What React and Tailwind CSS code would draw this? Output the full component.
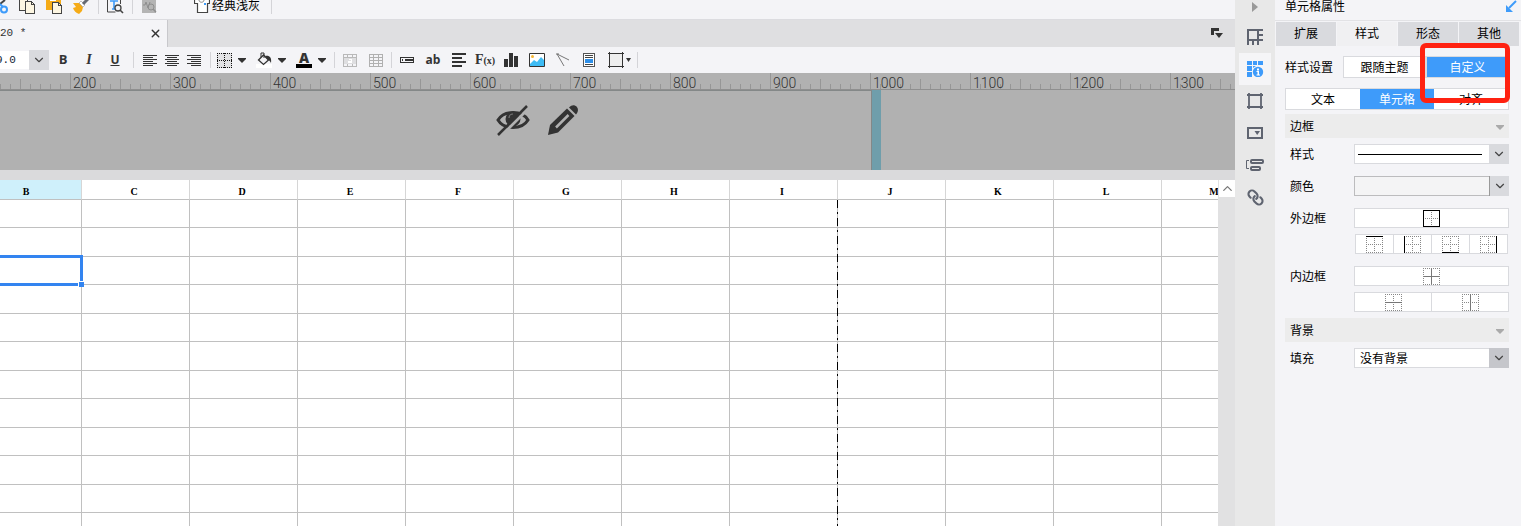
import React, { useState } from 'react'
import { ChevronDown, ChevronUp, Link, X } from 'lucide-react';

const columns = ['B', 'C', 'D', 'E', 'F', 'G', 'H', 'I', 'J', 'K', 'L', 'M'];
const rulerMarks = ['', 200, 300, 400, 500, 600, 700, 800, 900, 1000, 1100, 1200, 1300];
const rows = Array.from({ length: 40 }, (_, i) => i);

/* ---------- small shared pieces ---------- */

const Sep = ({ tight }) => (
  <span className={`w-px h-4 shrink-0 bg-[#d4d4d8] ${tight ? 'mx-0.5' : 'mx-[5px]'}`} />
);

const Caret = ({ className = 'text-[#333]' }) => (
  <svg width="8" height="5" viewBox="0 0 8 5" className={className}>
    <path d="M0 0h8v1L4 5 0 1z" fill="currentColor" />
  </svg>
);

const Tool = ({ label, wide = 'w-[26px]', children }) => (
  <button aria-label={label} className={`${wide} h-5 shrink-0 flex items-center justify-center text-[#333]`}>
    {children}
  </button>
);

// Icon button followed by a drop arrow
const DropTool = ({ label, children }) => (
  <div className="flex items-center shrink-0">
    <Tool label={label} wide="w-4">{children}</Tool>
    <Tool label={`${label} menu`} wide="w-5"><Caret /></Tool>
  </div>
);

const Lines = ({ widths, end, step = 2 }) => (
  <svg width="14" height={step > 2 ? 14 : 11} viewBox={step > 2 ? '0 0 14 14' : '0 0 14 11'} shapeRendering="crispEdges">
    {widths.map((w, i) => (
      <rect key={i} x={end === 'right' ? 14 - w : end === 'center' ? (14 - w) / 2 : 0} y={i * step} width={w} height={step > 2 ? 2 : 1} fill="#333" />
    ))}
  </svg>
);

/* ---------- top bar ---------- */

const TopBar = () => (
  <div className="h-5 shrink-0 flex items-start bg-[#f4f4f7] border-b border-[#dcdce0]">
    <button aria-label="Cut" className="w-[19px] h-[14px]">
      <svg width="8" height="14" viewBox="0 0 8 14" fill="none">
        <path d="M0 4l5-4" stroke="#444" strokeWidth="2" />
        <circle cx="4" cy="9.5" r="3" stroke="#3e9bfa" strokeWidth="2" />
        <path d="M0 4l3 3" stroke="#3e9bfa" strokeWidth="2" />
      </svg>
    </button>
    <button aria-label="Copy" className="w-[27px] h-[14px]">
      <svg width="17" height="14" viewBox="0 0 17 14" fill="#fdf6e2" stroke="#444" shapeRendering="crispEdges">
        <path d="M.5-2v12h8V-2" />
        <path d="M6.500 1.500h6l3 3v9h-9z" />
        <path d="M12.500 1.500v3h3" fill="none" />
      </svg>
    </button>
    <button aria-label="Paste" className="w-[27px] h-[14px]">
      <svg width="17" height="14" viewBox="0 0 17 14" shapeRendering="crispEdges">
        <path d="M0 0h15v10H0z" fill="#f5ab17" />
        <path d="M4 0h6v1H4z" fill="#fff" />
        <path d="M6.500 2.500h6l3 3v8h-9z" fill="#fdf6e2" stroke="#444" />
        <path d="M12.500 2.500v3h3" fill="none" stroke="#444" />
      </svg>
    </button>
    <button aria-label="Format painter" className="w-5 h-[14px]">
      <svg width="16" height="14" viewBox="0 0 16 14">
        <path d="M0 3l7 0 3 4-1 4-3 3c-3-1-5-3-6-6l3-1z" fill="#f5ab17" />
        <path d="M6 3l2-2 4 4-2 2z" fill="#fff" stroke="#999" strokeWidth=".6" />
        <path d="M10 4l5-5" stroke="#666a72" strokeWidth="3" />
      </svg>
    </button>
    <span className="w-px h-[14px] ml-[5px] mr-2 bg-[#d4d4d8]" />
    <button aria-label="Preview" className="w-5 h-[14px]">
      <svg width="17" height="14" viewBox="0 0 17 14" fill="none">
        <path d="M.5-1v13h8M13.500-1v5" stroke="#444" />
        <path d="M3 1h8M7 1v8M5 9h3" stroke="#3e9bfa" strokeWidth="1.600" />
        <circle cx="11" cy="8" r="3" fill="#f4f4f7" stroke="#444" strokeWidth="1.300" />
        <path d="M13 10l3 3" stroke="#444" strokeWidth="1.600" />
      </svg>
    </button>
    <span className="w-px h-[14px] ml-[5px] mr-[9px] bg-[#d4d4d8]" />
    <button aria-label="Check" className="w-[52px] h-[14px]">
      <svg width="15" height="14" viewBox="0 0 15 14" fill="none">
        <path d="M0 0h14v13H0z" fill="#b4b4b4" />
        <path d="M1 5h2l1-3 2 6 2-6" stroke="#8e8e8e" />
        <circle cx="9" cy="7" r="3" stroke="#8e8e8e" />
        <path d="M11 9l3 3" stroke="#8e8e8e" strokeWidth="1.500" />
      </svg>
    </button>
    <button className="flex items-start gap-0.5 text-xs leading-3 text-black whitespace-nowrap">
      <svg width="16" height="14" viewBox="0 0 16 14" fill="none">
        <path d="M.5-1v4.500h3v9h10v-9h2V-1" fill="#fff" stroke="#444" strokeWidth="1.200" />
        <path d="M5 0c0 3 5 3 5 0" stroke="#888" />
        <path d="M10 3h2v2h-2z" fill="#3e9bfa" />
      </svg>
      经典浅灰
    </button>
    <span className="w-px h-[14px] ml-[11px] bg-[#d4d4d8]" />
  </div>
);

const FileTabs = () => (
  <div className="h-[27px] shrink-0 flex bg-[#dfdfe1]">
    <div className="w-[168px] flex items-center justify-between pr-[5px] bg-[#f4f4f7] border-r border-[#c8c8cc]">
      <span className="font-['Liberation_Mono',monospace] text-[11px] text-[#333]">20 *</span>
      <button aria-label="Close" className="text-[#333]"><X size={13} strokeWidth={2.5} /></button>
    </div>
    <button aria-label="All files" className="ml-auto mr-3">
      <svg width="12" height="11" viewBox="0 0 12 11" fill="#333">
        <path d="M0 0h8v3H3v4H0z" />
        <path d="M4 5h8L8 10z" />
      </svg>
    </button>
  </div>
);

/* ---------- formatting toolbar ---------- */

const FormatBar = () => (
  <div className="h-[26px] shrink-0 flex items-center bg-[#f4f4f7]">
    <input aria-label="Font size" defaultValue="9.0" className="w-[35px] -ml-1.5 h-[18px] pl-0.5 bg-white font-['Liberation_Mono',monospace] text-[11px] text-[#123] outline-none" />
    <button aria-label="Font sizes" className="w-5 h-5 flex items-center justify-center bg-[#d9dade] text-[#444] mr-px">
      <ChevronDown size={14} />
    </button>
    <Tool label="Bold"><b className="font-['Open_Sans',sans-serif] text-[13px] font-bold">B</b></Tool>
    <Tool label="Italic"><i className="font-['Liberation_Serif',serif] text-sm font-bold">I</i></Tool>
    <Tool label="Underline"><u className="font-['Open_Sans',sans-serif] text-xs font-bold">U</u></Tool>
    <Sep />
    <Tool label="Align left" wide="w-[22px]"><Lines widths={[14, 10, 14, 10, 14, 10]} /></Tool>
    <Tool label="Align center" wide="w-[22px]"><Lines widths={[14, 10, 14, 10, 14, 10]} end="center" /></Tool>
    <Tool label="Align right" wide="w-[22px]"><Lines widths={[14, 10, 14, 10, 14, 10]} end="right" /></Tool>
    <Sep />
    <div className="flex gap-1">
      <DropTool label="Border">
        <svg width="15" height="15" viewBox="0 0 15 15" fill="none" stroke="#111" strokeDasharray="1 1" shapeRendering="crispEdges">
          <path d="M0 0h15v15H0z" fill="#e2e2e4" stroke="none" />
          <path d="M0 .5h15M0 7.500h15M0 14.500h15M.5 0v15M7.500 0v15M14.500 0v15" />
        </svg>
      </DropTool>
      <DropTool label="Fill">
        <svg width="16" height="16" viewBox="0 0 16 16" fill="none">
          <path d="M0 12h16v4H0z" fill="#fff" />
          <path d="M7.500 3l5 5-5 4.500-5-4.500z" stroke="#333" strokeWidth="1.300" />
          <path d="M5 5V1h3v5" stroke="#333" />
          <path d="M9 4c4-1 7 1 6 7-1-2-2-3-3-3z" fill="#333" />
        </svg>
      </DropTool>
      <DropTool label="Text color">
        <span className="w-4 h-4 flex items-center justify-center border-b-4 border-black font-['Open_Sans',sans-serif] text-sm leading-3 font-extrabold">A</span>
      </DropTool>
    </div>
    <Sep tight />
    <Tool label="Merge">
      <svg width="14" height="13" viewBox="0 0 14 13" fill="none" stroke="#b9b9b9" shapeRendering="crispEdges">
        <path d="M.5.5h13v12H.5zM0 3.500h14M4.500 0v3M9.500 0v3M4.500 10v3M9.500 10v3" />
        <path d="M1 4h12v6H1z" fill="#dedee0" stroke="none" />
        <path d="M5.500 5.500h3v3h-3v-1.500h3" stroke="#fff" />
      </svg>
    </Tool>
    <Tool label="Unmerge">
      <svg width="14" height="13" viewBox="0 0 14 13" fill="none" stroke="#b0b0b0" shapeRendering="crispEdges">
        <path d="M.5.5h13v12H.5zM0 3.500h14M0 6.500h14M0 9.500h14M4.500 0v13M9.500 0v13" />
      </svg>
    </Tool>
    <Sep tight />
    <Tool label="Text field">
      <svg width="14" height="6" viewBox="0 0 14 6" fill="none" stroke="#333" shapeRendering="crispEdges">
        <path d="M.5.5h13v5H.5zM2.500 2v2M5 2.500h7v1H5z" />
      </svg>
    </Tool>
    <Tool label="Label"><span className="font-['Open_Sans',sans-serif] text-xs font-bold">ab</span></Tool>
    <Tool label="Rich text"><Lines widths={[14, 10, 14, 10]} step={4} /></Tool>
    <Tool label="Formula"><span className="font-['Liberation_Serif',serif] text-sm font-bold">F<span className="text-[10px]">(x)</span></span></Tool>
    <Tool label="Chart">
      <svg width="14" height="14" viewBox="0 0 14 14" fill="#333"><path d="M0 6h4v8H0zM5 0h4v14H5zM10 3h4v11h-4z" /></svg>
    </Tool>
    <Tool label="Image">
      <svg width="16" height="14" viewBox="0 0 16 14">
        <path d="M.5.5h15v13H.5z" fill="#fff" stroke="#333" />
        <circle cx="3.500" cy="3.500" r="1.500" fill="#f7b733" />
        <path d="M1 11l4-4 3 2 4-5 3 3v6H1z" fill="#3ebcf5" />
      </svg>
    </Tool>
    <Tool label="Slash line">
      <svg width="14" height="14" viewBox="0 0 14 14" fill="none" stroke="#777"><path d="M1 1l12 6M1 1l7 12M0 1h3" /></svg>
    </Tool>
    <Tool label="Sub report">
      <svg width="12" height="14" viewBox="0 0 12 14" shapeRendering="crispEdges">
        <path d="M.5.5h11v13H.5z" fill="#fff" stroke="#555" />
        <path d="M2 2h8v1H2zM2 4h8v1H2zM2 11h8v1H2z" fill="#444" />
        <path d="M2 6h8v4H2z" fill="#2f8fe8" />
      </svg>
    </Tool>
    <div className="flex items-center ml-1.5">
      <Tool label="Float element" wide="w-4">
        <svg width="16" height="16" viewBox="0 0 16 16" fill="none" stroke="#333" shapeRendering="crispEdges">
          <path d="M2 2h12v12H2z" fill="#eee" stroke="none" />
          <path d="M0 1.500h16M0 14.500h16M1.500 0v16M14.500 0v16" />
        </svg>
      </Tool>
      <Tool label="Float menu" wide="w-2"><svg width="5" height="4" viewBox="0 0 5 4"><path d="M0 0h5L2.500 4z" fill="#333" /></svg></Tool>
    </div>
    <Sep />
  </div>
);

/* ---------- ruler + canvas band ---------- */

const Ruler = () => (
  <div className="h-[17px] shrink-0 flex overflow-hidden bg-[#b1b1b1] border-b border-[#8f8f8f]">
    {rulerMarks.map((mark, i) => (
      <div key={i} className={`relative w-[100px] h-4 shrink-0 ${i === 0 ? '-ml-[30px]' : ''}`}>
        <svg width="100" height="16" viewBox="0 0 100 16" stroke="#969696" shapeRendering="crispEdges" className="absolute inset-0">
          <path d="M.5 0v16M50.500 6v10" />
          {[10, 20, 30, 40, 60, 70, 80, 90].map((x) => <path key={x} d={`M${x + 0.5} 11v5`} />)}
        </svg>
        <span className="relative pl-[3px] block font-['Roboto',sans-serif] font-light text-sm leading-5 text-[#333]">{mark}</span>
      </div>
    ))}
  </div>
);

const Band = () => (
  <div className="h-[90px] shrink-0 flex bg-[#b1b1b1] border-b-[10px] border-[#dadadc]">
    <div className="w-[872px] shrink-0 flex items-start gap-4 pl-[496px] pt-3 border-t border-r border-[#848888]">
      <button aria-label="Hide">
        <svg width="34" height="34" viewBox="0 0 34 34" fill="none">
          <path d="M2 17C8 7 26 7 32 17 26 27 8 27 2 17z" stroke="#333" strokeWidth="3" />
          <circle cx="17" cy="16" r="7.500" fill="#333" />
          <path d="M13 15a4 4 0 0 1 4-4" stroke="#777" strokeWidth="1.200" />
          <path d="M4 34L34 4" stroke="#b1b1b1" strokeWidth="3" />
          <path d="M2 32L31 3" stroke="#333" strokeWidth="2.500" />
        </svg>
      </button>
      <button aria-label="Edit">
        <svg width="34" height="34" viewBox="0 0 34 34" fill="#333">
          <path d="M2 32l2-10L21 5.500l7.500 7.500L12 29.500z" />
          <path d="M10 24.500L22.500 12" stroke="#b1b1b1" strokeWidth="2.500" />
          <path d="M23 4.500C26 1 29 2 30.500 3.500s2.500 4.500-.5 8z" />
        </svg>
      </button>
    </div>
    <div className="w-[9px] bg-[#6f9eab]" />
  </div>
);

/* ---------- spreadsheet ---------- */

const Sheet = () => (
  <div className="flex-1 min-h-0 flex bg-white">
    <div className="relative flex-1 min-w-0 overflow-hidden">
      <table className="table-fixed w-[1296px] -ml-[26px] border-separate border-spacing-0">
        <thead>
          <tr className="h-5">
            {columns.map((c) => (
              <th key={c} className={`p-0 pt-1 pr-[3px] border-r border-b border-r-[#d6d6d6] border-b-[#c0c0c0] font-['Liberation_Serif',serif] text-[10px] leading-[15px] font-bold text-black ${c === 'B' ? 'bg-[#cff0fb]' : 'bg-white'}`}>
                {c}
              </th>
            ))}
          </tr>
        </thead>
        <tbody>
          {rows.map((r) => (
            <tr key={r} className={r % 2 ? 'h-[29px]' : 'h-7'}>
              {columns.map((c) => (
                <td key={c} className="relative p-0 border-r border-b border-[#c0c0c0]">
                  {r === 2 && c === 'B' && (
                    <div className="absolute left-0 -right-0.5 -top-0.5 -bottom-0.5 z-10 border-[3px] border-[#3384f0]">
                      <span className="absolute -right-1 -bottom-1 w-[6px] h-[6px] bg-[#3384f0] border-t border-l border-white" />
                    </div>
                  )}
                  {/* page break line */}
                  {c === 'I' && r === 0 && (
                    <svg width="1" height="1200" className="absolute -right-px top-0 z-10" shapeRendering="crispEdges">
                      <path d="M.5 0v1200" stroke="#000" strokeDasharray="8 4 2 4" />
                    </svg>
                  )}
                </td>
              ))}
            </tr>
          ))}
        </tbody>
      </table>
    </div>
    <div className="w-[17px] shrink-0 pl-px bg-[#e1e1e2]">
      <button aria-label="Scroll up" className="w-4 h-[17px] flex items-center justify-center bg-white text-[#777]">
        <ChevronUp size={15} strokeWidth={2} />
      </button>
    </div>
  </div>
);

/* ---------- icon rail ---------- */

const railIcons = [
  { name: 'Cell element', art: <path d="M2 1h10v10H2zM12 1h5M12 6h5M12 11h5M2 12v4M7 12v4M12 12v4" /> },
  {
    name: 'Cell attributes',
    active: true,
    art: (
      <g stroke="none" fill="currentColor">
        <path d="M1 0h5v4H1zM7 0h4v4H7zM12 0h5v4h-5zM1 5h5v5H1zM1 11h5v5H1zM7 5h3L7 7z" />
        <circle cx="12" cy="11" r="5.200" />
        <path d="M11 7.500h2v2h-2zM10.500 10H13v3.500h1v1h-3.500v-1h1V11h-1z" fill="#fff" />
      </g>
    ),
  },
  { name: 'Float element', art: <path d="M3 2h12v12H3zM1 2h16M1 14h16M3 0v16M15 0v16" strokeWidth="1.800" /> },
  { name: 'Widget', art: <><path d="M2 3h14v10H2z" /><path d="M8.500 6h5.500L11.200 10z" fill="currentColor" stroke="none" /></> },
  { name: 'Condition', art: <><path d="M3 3.500H.5v8H3" strokeWidth="1" /><rect x="5" y="3" width="12" height="3" rx="1" /><rect x="5" y="10" width="9" height="3" rx="1" /></> },
];

const Rail = () => (
  <nav className="w-10 shrink-0 flex flex-col items-center bg-[#e8e8e8]">
    <button aria-label="Collapse" className="h-[21px] pb-2 flex items-center">
      <svg width="6" height="10" viewBox="0 0 6 10"><path d="M0 0l6 5-6 5z" fill="#999" /></svg>
    </button>
    {railIcons.map((item) => (
      <button
        key={item.name}
        aria-label={item.name}
        className={`w-8 h-8 flex items-center justify-center ${item.active ? 'bg-[#f5f5f7] text-[#3e9bfa]' : 'text-[#5f6470]'}`}
      >
        <svg width="18" height="16" viewBox="0 0 18 16" fill="none" stroke="currentColor" strokeWidth="2">
          {item.art}
        </svg>
      </button>
    ))}
    <button aria-label="Hyperlink" className="w-8 h-8 flex items-center justify-center text-[#5f6470]">
      <Link size={17} strokeWidth={3} className="rotate-90" />
    </button>
  </nav>
);

/* ---------- attribute panel ---------- */

const Row = ({ label, htmlFor, children }) => (
  <div className="flex items-start mb-3 pl-[5px]">
    <label htmlFor={htmlFor} className="w-16 shrink-0 pt-px leading-5 -mb-px">{label}</label>
    <div className="flex-1 min-w-0">{children}</div>
  </div>
);

const Section = ({ title }) => (
  <button className="w-full h-6 mb-1.5 px-[5px] pt-0.5 flex items-center justify-between bg-[#ececec]">
    {title}
    <Caret className="text-[#aaa]" />
  </button>
);

const DropBox = ({ id, arrow = 'bg-[#d9dade]', box = 'bg-white border-[#d9dade]', line, children }) => (
  <div className="relative flex h-5">
    <select id={id} className={`w-full h-5 pl-[5px] pt-px pr-5 appearance-none border outline-none ${box}`}>
      {children}
    </select>
    {line && <span className="absolute left-1 right-[27px] top-[10px] h-px bg-black pointer-events-none" />}
    <span className={`absolute right-0 top-0 w-5 h-5 flex items-center justify-center pointer-events-none text-[#444] ${arrow}`}>
      <ChevronDown size={14} />
    </span>
  </div>
);

// dotted 17px grid with solid strokes on top of it
const GridIcon = ({ solid, color = '#000', frame = true }) => (
  <svg width="17" height="17" viewBox="0 0 17 17" fill="none" shapeRendering="crispEdges">
    <path d={frame ? 'M0 .5h17M0 8.500h17M0 16.500h17M.5 0v17M8.500 0v17M16.500 0v17' : 'M0 8.500h17M8.500 0v17'} stroke="#888" strokeDasharray="1 1" />
    <path d={solid} stroke={color} />
  </svg>
);

const BorderButton = ({ label, className = 'w-full', ...icon }) => (
  <button aria-label={label} className={`h-5 flex items-center justify-center bg-white border border-[#d9dade] ${className}`}>
    <GridIcon {...icon} />
  </button>
);

const Panel = () => {
  const [tab, setTab] = useState('样式');
  const [mode, setMode] = useState('自定义');
  const [part, setPart] = useState('单元格');

  return (
    <aside className="w-[246px] shrink-0 bg-[#f4f4f7] text-xs text-black">
      <div className="h-5 flex items-start justify-between pl-2.5 pr-1">
        <h2 className="leading-[15px]">单元格属性</h2>
        <button aria-label="Pop out" className="text-[#3e9bfa]">
          <svg width="12" height="13" viewBox="0 0 12 13" fill="none" stroke="currentColor" strokeWidth="2">
            <path d="M11 1L4 8" /><path d="M1 5v7h7z" fill="currentColor" stroke="none" />
          </svg>
        </button>
      </div>
      <div role="tablist" className="flex gap-px pl-px pr-0.5 pt-px border-t border-[#e2e2e5]">
        {['扩展', '样式', '形态', '其他'].map((t) => (
          <button key={t} role="tab" aria-selected={tab === t} onClick={() => setTab(t)} className={`flex-1 h-6 ${tab === t ? 'bg-[#f0f0f2]' : 'bg-[#d9dade]'}`}>
            {t}
          </button>
        ))}
      </div>

      <div className="pl-2.5 pr-3 pt-2.5">
        <div className="flex items-center mb-2.5">
          <span className="w-[58px] shrink-0 pt-px">样式设置</span>
          <div className="relative flex-1 flex h-[22px]">
            {['跟随主题', '自定义'].map((m) => (
              <button key={m} onClick={() => setMode(m)} className={`flex-1 pt-px border border-[#d9dade] ${mode === m ? 'bg-[#3e9bfa] text-white' : 'bg-white'}`}>
                {m}
              </button>
            ))}
            <span className="absolute left-[77px] -right-px -top-[13px] h-[60px] z-10 border-[5px] border-[#ff2211] rounded-md pointer-events-none" />
          </div>
        </div>
        <div className="flex h-[22px] mb-1 bg-white border border-[#d9dade]">
          {['文本', '单元格', '对齐'].map((p) => (
            <button key={p} onClick={() => setPart(p)} className={`flex-1 pt-px ${part === p ? 'bg-[#3e9bfa] text-white' : ''}`}>
              {p}
            </button>
          ))}
        </div>

        <Section title="边框" />
        <Row label="样式" htmlFor="line-style">
          <DropBox id="line-style" line><option value="solid" aria-label="solid" /></DropBox>
        </Row>
        <Row label="颜色" htmlFor="line-color">
          <DropBox id="line-color" box="bg-[#f4f4f5] border-[#bcbcbe]" arrow="bg-[#d9dade] border-l border-[#999]"><option value="auto" aria-label="auto" /></DropBox>
        </Row>
        <Row label="外边框">
          <BorderButton label="All outer" frame={false} solid="M.5.5h16v16H.5z" />
          <div className="flex mt-1.5 px-px">
            <BorderButton label="Top" className="flex-1" solid="M0 .5h17" />
            <BorderButton label="Left" className="flex-1 -ml-px" solid="M.5 0v17" />
            <BorderButton label="Bottom" className="flex-1 -ml-px" solid="M0 16.500h17" />
            <BorderButton label="Right" className="flex-1 -ml-px" solid="M16.500 0v17" />
          </div>
        </Row>
        <Row label="内边框">
          <BorderButton label="All inner" color="#777" solid="M1 8.500h15M8.500 1v15" />
          <div className="flex mt-1.5 -mb-1.5">
            <BorderButton label="Horizontal" className="flex-1" color="#777" solid="M0 8.500h17" />
            <BorderButton label="Vertical" className="flex-1 -ml-px" color="#777" solid="M8.500 0v17" />
          </div>
        </Row>

        <Section title="背景" />
        <Row label="填充" htmlFor="fill">
          <DropBox id="fill" arrow="bg-[#c5c6cb]"><option>没有背景</option></DropBox>
        </Row>
      </div>
    </aside>
  );
};

export default function App() {
  return (
    <div className="h-screen flex overflow-hidden bg-[#f4f4f7] font-['Liberation_Sans','Noto_Sans_CJK_SC',sans-serif]">
      <main className="flex-1 min-w-0 flex flex-col overflow-hidden">
        <TopBar />
        <FileTabs />
        <FormatBar />
        <Ruler />
        <Band />
        <Sheet />
      </main>
      <Rail />
      <Panel />
    </div>
  );
}
